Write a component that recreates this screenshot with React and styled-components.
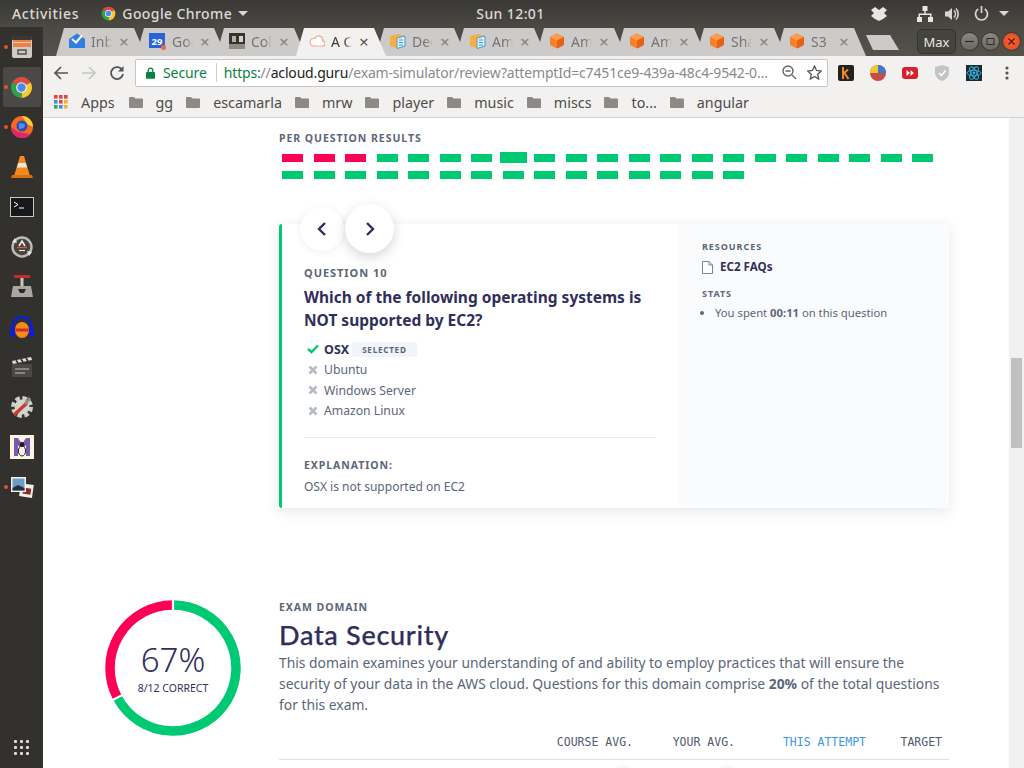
import React from 'react'
import styled, { createGlobalStyle } from 'styled-components'

const GlobalStyle = createGlobalStyle`
  html, body { margin: 0; padding: 0; height: 768px; overflow: hidden; background: #fff; }
  #root { height: 768px; }
  * { box-sizing: border-box; }
`

const ui = `"Noto Sans", "Liberation Sans", sans-serif`
const navy = '#302f5c'
const slate = '#5b6678'
const green = '#00c974'
const pink = '#ff0058'

const Desktop = styled.div`
  width: 1024px;
  height: 768px;
  display: flex;
  flex-direction: column;
  overflow: hidden;
  font-family: ${ui};
`

/* ---- gnome top bar ---- */
const TopBar = styled.div`
  height: 27px;
  flex: none;
  display: flex;
  align-items: center;
  background: linear-gradient(#3a3834, #4b4944);
  color: #dcdad6;
  font-size: 14px;
  font-weight: 500;
  letter-spacing: 0.4px;
`
const BarSide = styled.div`
  flex: 1;
  display: flex;
  align-items: center;
  justify-content: ${({ $end }) => ($end ? 'flex-end' : 'flex-start')};
  padding: ${({ $end }) => ($end ? '0 15px 0 0' : '0 0 0 12px')};
`
const Activities = styled.span`
  letter-spacing: 0.7px;
`
const AppName = styled.span`
  display: flex;
  align-items: center;
  gap: 6px;
  margin-left: 22px;
`
const Caret = styled.span`
  width: 0;
  height: 0;
  border-left: 5px solid transparent;
  border-right: 5px solid transparent;
  border-top: 5px solid #d8d6d2;
`
const TrayIcon = styled.svg`
  display: block;
  margin-right: ${({ $gap }) => $gap || 0}px;
`

/* ---- main area ---- */
const Workspace = styled.div`
  flex: 1;
  min-height: 0;
  display: flex;
`
const Dock = styled.div`
  width: 43px;
  flex: none;
  display: flex;
  flex-direction: column;
  align-items: center;
  background: #33312d;
`
const DockSlot = styled.div`
  position: relative;
  width: 38px;
  height: 40px;
  display: flex;
  align-items: center;
  justify-content: center;
  border-radius: 3px;
  background: ${({ $active }) => ($active ? '#4b4946' : 'transparent')};
`
const RunDot = styled.span`
  position: absolute;
  left: 1px;
  top: 18px;
  width: 4px;
  height: 4px;
  border-radius: 50%;
  background: #e0552a;
`
const DockGrid = styled.div`
  margin-top: auto;
  margin-bottom: 13px;
  display: grid;
  grid-template-columns: repeat(3, 3px);
  gap: 3px;
  & > span { width: 3px; height: 3px; background: #dedcd8; border-radius: 1px; }
`
const Browser = styled.div`
  flex: 1;
  min-width: 0;
  display: flex;
  flex-direction: column;
`

/* ---- tabs ---- */
const TabStrip = styled.div`
  height: 29px;
  flex: none;
  display: flex;
  align-items: flex-end;
  padding-left: 13px;
  background: linear-gradient(#4b4944, #55524c);
`
const Tab = styled.div`
  position: relative;
  width: 90px;
  height: 28px;
  margin-right: -10px;
  flex: none;
  display: flex;
  align-items: center;
  padding: 0 0 2px 13px;
  clip-path: polygon(0 100%, 8px 0, 78px 0, 90px 100%);
  background: ${({ $active }) => ($active ? '#f2f1f0' : '#cdcbc9')};
  color: ${({ $active }) => ($active ? '#3a3a3a' : '#77746f')};
  font-size: 14px;
  z-index: ${({ $active }) => ($active ? 2 : 1)};
`
const TabTitle = styled.span`
  width: 21px;
  margin-left: 6px;
  overflow: hidden;
  white-space: nowrap;
  -webkit-mask-image: linear-gradient(90deg, #000 65%, transparent);
  mask-image: linear-gradient(90deg, #000 65%, transparent);
`
const TabClose = styled.span`
  margin-left: 7px;
  font-size: 17px;
  line-height: 1;
  color: ${({ $active }) => ($active ? '#555' : '#85827e')};
`
const NewTab = styled.div`
  width: 33px;
  height: 15px;
  margin: 0 0 6px 10px;
  flex: none;
  background: #cdcbc9;
  clip-path: polygon(0 0, 24px 0, 100% 100%, 7px 100%);
`
const WindowButtons = styled.div`
  margin-left: auto;
  align-self: center;
  display: flex;
  align-items: center;
  gap: 2px;
  padding-right: 3px;
`
const MaxLabel = styled.div`
  width: 39px;
  height: 25px;
  margin-right: 2px;
  display: flex;
  align-items: center;
  justify-content: center;
  border: 1px solid #35332f;
  border-radius: 5px;
  background: #45433e;
  color: #e8e6e2;
  font-size: 13px;
`
const RoundButton = styled.div`
  width: 19px;
  height: 19px;
  border-radius: 50%;
  display: flex;
  align-items: center;
  justify-content: center;
  background: ${({ $close }) => ($close ? 'radial-gradient(#f0653a, #e0481c)' : 'linear-gradient(#8a8780, #6a6761)')};
  border: 1px solid #3a3834;
`

/* ---- toolbar ---- */
const Toolbar = styled.div`
  height: 33px;
  flex: none;
  display: flex;
  align-items: center;
  background: #f2f1f0;
  padding-left: 10px;
`
const NavIcon = styled.svg`
  display: block;
  flex: none;
  margin-right: ${({ $gap }) => $gap || 0}px;
`
const AddressBar = styled.div`
  width: 693px;
  height: 28px;
  margin-left: 10px;
  flex: none;
  display: flex;
  align-items: center;
  padding: 0 5px 0 10px;
  background: #fff;
  border: 1px solid #c6c5c3;
  border-radius: 2px;
  font-size: 14px;
  white-space: nowrap;
`
const SecureLabel = styled.span`
  margin-left: 8px;
  padding-right: 9px;
  border-right: 1px solid #cfcfcf;
  color: #0b8043;
  letter-spacing: -0.1px;
`
const UrlText = styled.span`
  margin-left: 7px;
  flex: 1;
  overflow: hidden;
  color: #8a8a8a;
  letter-spacing: -0.17px;
  & > b { font-weight: 400; color: #0b8043; }
  & > i { font-style: normal; color: #222; }
`
const Extensions = styled.div`
  flex: 1;
  display: flex;
  align-items: center;
  padding-left: 9px;
`

/* ---- bookmarks ---- */
const BookmarkBar = styled.div`
  height: 29px;
  flex: none;
  display: flex;
  align-items: center;
  padding: 0 0 2px 11px;
  background: #f2f1f0;
  border-bottom: 1px solid #d2d1cf;
  color: #4d4b48;
  font-size: 14.3px;
`
const AppsLabel = styled.span`
  margin: 0 14px 0 13px;
`
const Bookmark = styled.span`
  display: flex;
  align-items: center;
  gap: 13px;
  margin-right: 13px;
`

/* ---- page ---- */
const Viewport = styled.div`
  flex: 1;
  min-height: 0;
  display: flex;
  background: #fff;
`
const Page = styled.div`
  flex: 1;
  min-width: 0;
  overflow: hidden;
  padding-left: 236px;
`
const Scrollbar = styled.div`
  width: 15px;
  flex: none;
  padding: 240px 2px 0;
  background: #f1f1f1;
  & > div { height: 90px; background: #c1c1c1; }
`
const Content = styled.div`
  width: 670px;
`
const Eyebrow = styled.div`
  color: ${slate};
  font-size: 10.5px;
  line-height: 14px;
  font-weight: 700;
  letter-spacing: 0.95px;
  text-transform: uppercase;
`
const ResultsLabel = styled(Eyebrow)`
  padding-top: 13px;
`
const ResultGrid = styled.div`
  display: grid;
  grid-template-columns: repeat(21, 21px);
  column-gap: 10.5px;
  row-gap: 9px;
  margin: 9px 0 0 3px;
`
const ResultBar = styled.div`
  height: 8px;
  position: relative;
  background: ${({ $wrong }) => ($wrong ? pink : green)};
  ${({ $current }) => $current && `
    margin: -2px -3px -1px -3px;
    height: 11px;
    box-shadow: 0 0 0 2px #fff, 0 1px 5px 2px rgba(60, 70, 90, .12);
  `}
`
const Card = styled.div`
  position: relative;
  margin-top: 45px;
  height: 284px;
  display: flex;
  border-left: 3px solid ${green};
  border-radius: 3px 0 0 3px;
  box-shadow: 0 3px 14px rgba(60, 70, 90, .13);
`
const CardNav = styled.div`
  position: absolute;
  left: 18px;
  top: -20px;
  display: flex;
  align-items: center;
  gap: 1px;
`
const NavCircle = styled.div`
  width: ${({ $big }) => ($big ? 49 : 44)}px;
  height: ${({ $big }) => ($big ? 49 : 44)}px;
  border-radius: 50%;
  display: flex;
  align-items: center;
  justify-content: center;
  background: #fff;
  box-shadow: ${({ $big }) => ($big ? '0 4px 12px rgba(50, 50, 90, .2)' : '0 1px 6px rgba(50, 50, 90, .08)')};
`
const CardMain = styled.div`
  width: 397px;
  flex: none;
  padding: 42px 23px 0 22px;
  background: #fff;
`
const QuestionLabel = styled(Eyebrow)`
  font-size: 11px;
`
const QuestionTitle = styled.h2`
  margin: 6px 0 0;
  color: ${navy};
  font-size: 15.5px;
  line-height: 23px;
  font-weight: 700;
`
const Options = styled.div`
  margin-top: 7.3px;
`
const Option = styled.div`
  height: 20.4px;
  display: flex;
  align-items: center;
  color: ${({ $picked }) => ($picked ? navy : slate)};
  font-size: ${({ $picked }) => ($picked ? 12.5 : 12.2)}px;
  font-weight: ${({ $picked }) => ($picked ? 700 : 400)};
`
const OptionMark = styled.span`
  width: 17px;
  flex: none;
  margin-right: 3px;
  display: flex;
  justify-content: center;
`
const SelectedTag = styled.span`
  margin-left: 3px;
  padding: 0 10px;
  height: 15px;
  display: flex;
  align-items: center;
  border-radius: 2px;
  background: #f1f4f8;
  color: ${slate};
  font-size: 8.2px;
  font-weight: 700;
  letter-spacing: 0.7px;
`
const Divider = styled.hr`
  margin: 15.7px 0 0;
  border: 0;
  border-top: 1px solid #e8e9ec;
`
const ExplainLabel = styled(Eyebrow)`
  margin-top: 20px;
`
const ExplainText = styled.div`
  margin-top: 5px;
  color: ${slate};
  font-size: 12px;
  line-height: 20px;
`
const CardAside = styled.div`
  flex: 1;
  padding: 17px 0 0 23px;
  background: #fafbfd;
`
const AsideLabel = styled(Eyebrow)`
  font-size: 9px;
  line-height: 12px;
  margin-top: ${({ $gap }) => $gap || 0}px;
`
const ResourceLink = styled.div`
  margin-top: 6px;
  display: flex;
  align-items: center;
  gap: 7px;
  color: ${navy};
  font-size: 11.6px;
  line-height: 16px;
  font-weight: 700;
`
const StatList = styled.ul`
  margin: 5px 0 0;
  padding: 0 0 0 13px;
  color: ${slate};
  font-size: 11.25px;
  line-height: 16px;
  & b { font-weight: 700; }
`
const DomainSection = styled.section`
  position: relative;
  margin-top: 92px;
`
const ScoreRing = styled.div`
  position: absolute;
  left: -174px;
  top: 0;
  width: 136px;
  height: 136px;
`
const ScoreText = styled.div`
  position: absolute;
  inset: 0;
  display: flex;
  flex-direction: column;
  align-items: center;
  color: ${navy};
`
const ScoreValue = styled.div`
  margin-top: 40px;
  font-size: 33px;
  line-height: 40px;
  font-weight: 300;
`
const ScoreCaption = styled.div`
  margin-top: 1px;
  font-size: 10.5px;
  line-height: 14px;
`
const DomainTitle = styled.h1`
  margin: 4px 0 0;
  color: ${navy};
  font-family: Lato, sans-serif;
  font-size: 27px;
  line-height: 34px;
  font-weight: 500;
  letter-spacing: 0.7px;
  -webkit-text-stroke: 0.25px ${navy};
`
const DomainText = styled.p`
  margin: 0;
  color: ${slate};
  font-size: 13.85px;
  line-height: 21px;
  & b { font-weight: 700; }
`
const ScoreColumns = styled.div`
  display: grid;
  grid-template-columns: 1fr 102px 131px 76px;
  padding-right: 7px;
`
const ScoreHeader = styled(ScoreColumns)`
  margin-top: 21px;
  padding-bottom: 10px;
  border-bottom: 1px solid #dfe1e4;
  font-family: "DejaVu Sans Mono", "Liberation Mono", monospace;
  font-size: 11.5px;
  line-height: 13px;
  text-align: right;
`
const ScoreColumn = styled.span`
  grid-column: ${({ $col }) => $col};
  color: ${({ $accent }) => ($accent ? '#3d97e3' : '#4f5a6c')};
`
const ScoreRow = styled(ScoreColumns)`
  padding-top: 5px;
`
const ScoreDot = styled.div`
  grid-column: ${({ $col }) => $col};
  justify-self: end;
  width: 26px;
  height: 26px;
  margin-right: ${({ $shift }) => $shift}px;
  border-radius: 50%;
  background: #f7f7f8;
`

/* ---- drawings ---- */
const ChromeLogo = ({ size }) => (
  <svg width={size} height={size} viewBox="0 0 24 24">
    <path d="M12 12L2.5 6.5A11 11 0 0 1 21.5 6.5Z" fill="#dd4b3e" />
    <path d="M12 12L21.5 6.5A11 11 0 0 1 12 23Z" fill="#f7c631" />
    <path d="M12 12L12 23A11 11 0 0 1 2.5 6.5Z" fill="#2fa04c" />
    <circle cx="12" cy="12" r="5.6" fill="#f2f2f2" />
    <circle cx="12" cy="12" r="4.4" fill="#4a8af0" />
  </svg>
)

const Cube = () => (
  <svg width="16" height="16" viewBox="0 0 16 16">
    <path d="M8 0.5L15 4V12L8 15.5L1 12V4Z" fill="#f7802a" />
    <path d="M8 0.5L15 4L8 7.5L1 4Z" fill="#fb9a4a" />
    <path d="M8 7.5L15 4V12L8 15.5Z" fill="#e2641a" />
  </svg>
)

const DocBox = () => (
  <svg width="17" height="16" viewBox="0 0 17 16">
    <path d="M1 3L9 1L16 3V13L8 15.5L1 13Z" fill="#f5b041" />
    <path d="M8 5L16 3V13L8 15.5Z" fill="#dff1fb" stroke="#3aa0dd" />
    <path d="M10 7H14M10 9.5H14M10 12H14" stroke="#3aa0dd" strokeWidth="1" />
  </svg>
)

const TabIcons = {
  inbox: () => (
    <svg width="16" height="16" viewBox="0 0 16 16">
      <path d="M0 6L8 0.5L16 6V15H0Z" fill="#2f7fe0" />
      <path d="M3 6L7 9.5L13 2.5" fill="none" stroke="#fff" strokeWidth="2" />
    </svg>
  ),
  calendar: () => (
    <svg width="17" height="17" viewBox="0 0 17 17">
      <rect width="16" height="15" fill="#2a63d8" />
      <text x="8" y="12" textAnchor="middle" fontFamily="Noto Sans, sans-serif" fontSize="9.5" fontWeight="700" fill="#fff">29</text>
      <circle cx="14.5" cy="14.5" r="2.5" fill="#ee6a3a" />
    </svg>
  ),
  photo: () => (
    <svg width="16" height="16" viewBox="0 0 16 16">
      <rect width="16" height="16" fill="#37332f" />
      <rect y="11" width="16" height="5" fill="#8f8a82" />
      <rect x="3" y="3" width="4" height="6" fill="#b5b0a8" />
      <rect x="10" y="3" width="4" height="6" fill="#d6d2cc" />
    </svg>
  ),
  cloud: () => (
    <svg width="16" height="16" viewBox="0 0 16 16">
      <path d="M4 13H13A2.6 2.6 0 0 0 13.6 7.8A4 4 0 0 0 6 5.4A3.6 3.6 0 0 0 4 13Z" fill="#fff" stroke="#f7a98a" strokeWidth="1.2" />
    </svg>
  ),
  doc: DocBox,
  cube: Cube,
}

const tabs = [
  { icon: 'inbox', title: 'Inb' },
  { icon: 'calendar', title: 'Goo' },
  { icon: 'photo', title: 'Col' },
  { icon: 'cloud', title: 'A C', active: true },
  { icon: 'doc', title: 'Dec' },
  { icon: 'doc', title: 'Am' },
  { icon: 'cube', title: 'Am' },
  { icon: 'cube', title: 'Am' },
  { icon: 'cube', title: 'Sha' },
  { icon: 'cube', title: 'S3 I' },
]

const dockIcons = [
  {
    dot: true,
    art: (
      <svg width="22" height="22" viewBox="0 0 22 22">
        <rect x="1" y="0" width="20" height="22" rx="2" fill="#cfccc6" />
        <rect x="1" y="0" width="20" height="4" rx="1" fill="#3a3834" />
        <rect x="2" y="4" width="18" height="7" fill="#e8824a" />
        <rect x="2" y="6" width="18" height="1" fill="#f4c49c" />
        <rect x="7" y="14" width="8" height="4" fill="none" stroke="#55534e" strokeWidth="1.5" />
      </svg>
    ),
  },
  { dot: true, active: true, art: <ChromeLogo size={23} /> },
  {
    dot: true,
    art: (
      <svg width="24" height="24" viewBox="0 0 24 24">
        <circle cx="12" cy="12" r="11" fill="#f36a1f" />
        <path d="M12 1A11 11 0 0 1 23 12L17 9L14 4Z" fill="#ffcb2e" />
        <path d="M1 12A11 11 0 0 0 12 23A11 11 0 0 0 20 19L8 17Z" fill="#e2246e" />
        <circle cx="12" cy="11" r="5.5" fill="#2b4fb8" />
        <path d="M9 8L15 9L14 13L9 14Z" fill="#5b89e6" />
      </svg>
    ),
  },
  {
    art: (
      <svg width="24" height="24" viewBox="0 0 24 24">
        <path d="M10 1H14L20 21H4Z" fill="#f28a1d" />
        <path d="M8.2 8H15.8L17 12.5H7Z" fill="#e9e6e0" />
        <path d="M2 20H22L23 23H1Z" fill="#d96f10" />
      </svg>
    ),
  },
  {
    art: (
      <svg width="24" height="20" viewBox="0 0 24 20">
        <rect x="0.5" y="0.5" width="23" height="19" fill="#17181a" stroke="#c9c7c2" />
        <path d="M4 5L8 7.5L4 10" fill="none" stroke="#fff" strokeWidth="1" />
        <path d="M9 11H14" stroke="#fff" strokeWidth="1" />
      </svg>
    ),
  },
  {
    art: (
      <svg width="24" height="24" viewBox="0 0 24 24">
        <circle cx="12" cy="12" r="9.5" fill="#45433f" stroke="#bdbbb6" strokeWidth="2.4" />
        <path d="M2 7L7 8L5 3Z M22 17L17 16L19 21Z" fill="#e6e4e0" />
        <path d="M9 11L12 6L15 11" fill="none" stroke="#f0eee9" strokeWidth="1.6" />
        <path d="M7 12.5H17" stroke="#e3562c" strokeWidth="1.2" />
        <path d="M9 15.5H15" stroke="#e6e4e0" strokeWidth="1.2" />
      </svg>
    ),
  },
  {
    art: (
      <svg width="24" height="24" viewBox="0 0 24 24">
        <rect x="4" y="0" width="16" height="3" rx="1" fill="#c92a2a" />
        <rect x="10.5" y="3" width="3" height="8" fill="#c8c6c0" />
        <path d="M3 11H21L23 22H1Z" fill="#a9a7a1" />
        <path d="M8 14H16L14 18H10Z" fill="#2a2927" />
      </svg>
    ),
  },
  {
    art: (
      <svg width="26" height="24" viewBox="0 0 26 24">
        <path d="M4 15V11A9 9 0 0 1 22 11V15" fill="none" stroke="#0a1fd8" strokeWidth="2.5" />
        <rect x="1" y="12" width="5" height="10" rx="2" fill="#0a1fd8" />
        <rect x="20" y="12" width="5" height="10" rx="2" fill="#0a1fd8" />
        <ellipse cx="13" cy="15" rx="7" ry="8" fill="#f28a1d" />
        <path d="M6.5 15H19.5" stroke="#d92a1c" strokeWidth="3" />
      </svg>
    ),
  },
  {
    art: (
      <svg width="22" height="22" viewBox="0 0 22 22">
        <path d="M1 5L20 1L21 4L2 8Z" fill="#dedcd6" />
        <path d="M5 4.2L7 7M10 3.2L12 6M15 2.2L17 5" stroke="#2c2b29" strokeWidth="1.6" />
        <rect x="1" y="8" width="20" height="13" fill="#4a4946" />
        <path d="M4 13H18M4 17H14" stroke="#c4c2bc" strokeWidth="1" />
      </svg>
    ),
  },
  {
    art: (
      <svg width="24" height="24" viewBox="0 0 24 24">
        <circle cx="12" cy="12" r="8" fill="none" stroke="#cfcdc8" strokeWidth="6" strokeDasharray="4 2.3" />
        <circle cx="12" cy="12" r="7.5" fill="#d5d3ce" />
        <path d="M4 20L17 8" stroke="#c93a32" strokeWidth="3.4" />
        <path d="M15 9L20 3" stroke="#8d8b86" strokeWidth="3" />
      </svg>
    ),
  },
  {
    art: (
      <svg width="24" height="24" viewBox="0 0 24 24">
        <rect width="24" height="24" fill="#fdf6dc" />
        <path d="M4 3H8L12 9L16 3H20V21H16V10L12 15L8 10V21H4Z" fill="#7a5ab0" />
        <ellipse cx="12" cy="16" rx="3.6" ry="5" fill="#f4f2ee" stroke="#1f1f1f" />
        <circle cx="12" cy="9.5" r="2.4" fill="#1f1f1f" />
      </svg>
    ),
  },
  {
    dot: true,
    art: (
      <svg width="24" height="24" viewBox="0 0 24 24">
        <rect x="10" y="9" width="13" height="13" fill="#f0eee9" transform="rotate(8 16 15)" />
        <rect x="13" y="13" width="8" height="6" fill="#8a2a2a" transform="rotate(8 16 15)" />
        <rect x="1" y="2" width="15" height="15" fill="#f4f2ee" />
        <rect x="2.5" y="3.5" width="12" height="12" fill="#6d9cc4" />
        <path d="M2.5 15.5V13L8 10L14.5 13V15.5Z" fill="#27313c" />
      </svg>
    ),
  },
]

const ExtensionIcon = ({ gap, children }) => (
  <NavIcon width="18" height="18" viewBox="0 0 18 18" $gap={gap}>{children}</NavIcon>
)

const appDots = ['#e0463a', '#e0463a', '#e0463a', '#3f8de0', '#e0463a', '#f2b233', '#32a852', '#3f8de0', '#f2b233']

const results = Array.from({ length: 36 }, (_, i) => ({ wrong: i < 3, current: i === 7 }))

const folder = (
  <svg width="14" height="11" viewBox="0 0 14 11">
    <path d="M0 1A1 1 0 0 1 1 0H5L6.5 1.5H13A1 1 0 0 1 14 2.5V10A1 1 0 0 1 13 11H1A1 1 0 0 1 0 10Z" fill="#8b8a88" />
  </svg>
)

const crossMark = (
  <svg width="10" height="10" viewBox="0 0 10 10">
    <path d="M1.5 1.5L8.5 8.5M8.5 1.5L1.5 8.5" stroke="#b4bbc4" strokeWidth="2.6" />
  </svg>
)

function arcPath(from, to, r) {
  const point = deg => {
    const a = ((deg - 90) * Math.PI) / 180
    return `${68 + r * Math.cos(a)} ${68 + r * Math.sin(a)}`
  }
  return `M${point(from)}A${r} ${r} 0 ${to - from > 180 ? 1 : 0} 1 ${point(to)}`
}

export default function App() {
  return (
    <Desktop>
      <GlobalStyle />
      <TopBar>
        <BarSide>
          <Activities>Activities</Activities>
          <AppName><ChromeLogo size={15} />Google Chrome<Caret /></AppName>
        </BarSide>
        <span>Sun 12:01</span>
        <BarSide $end>
          <TrayIcon width="16" height="14" viewBox="0 0 16 14" $gap={30} fill="#e8e6e2">
            <path d="M0 3L4 0L8 3L12 0L16 3L13 6L16 9L12 12L8 14L4 12L0 9L3 6Z" />
          </TrayIcon>
          <TrayIcon width="16" height="16" viewBox="0 0 16 16" $gap={12} fill="#e8e6e2">
            <path d="M5.5 0H10.5V5H8.7V7.5H14.5V11H16V16H11V11H13V9H3V11H5V16H0V11H1.5V7.5H7.3V5H5.5Z" />
          </TrayIcon>
          <TrayIcon width="15" height="14" viewBox="0 0 15 14" $gap={14} fill="#d8d6d2">
            <path d="M0 4.5H3L7 1V13L3 9.5H0Z" />
            <path d="M9 3.5A5 5 0 0 1 9 10.5M11 1.5A8 8 0 0 1 11 12.5" fill="none" stroke="#d8d6d2" strokeWidth="1.6" />
          </TrayIcon>
          <TrayIcon width="15" height="15" viewBox="0 0 15 15" $gap={10} fill="none" stroke="#d8d6d2" strokeWidth="1.7">
            <path d="M4.2 3A6 6 0 1 0 10.8 3M7.5 0V7" />
          </TrayIcon>
          <Caret />
        </BarSide>
      </TopBar>
      <Workspace>
        <Dock>
          {dockIcons.map((item, i) => (
            <DockSlot key={i} $active={item.active}>
              {item.dot && <RunDot />}
              {item.art}
            </DockSlot>
          ))}
          <DockGrid>{Array.from({ length: 9 }, (_, i) => <span key={i} />)}</DockGrid>
        </Dock>
        <Browser>
          <TabStrip>
            {tabs.map((tab, i) => {
              const Icon = TabIcons[tab.icon]
              return (
                <Tab key={i} $active={tab.active}>
                  <Icon />
                  <TabTitle>{tab.title}</TabTitle>
                  <TabClose $active={tab.active}>×</TabClose>
                </Tab>
              )
            })}
            <NewTab />
            <WindowButtons>
              <MaxLabel>Max</MaxLabel>
              <RoundButton>
                <svg width="9" height="9" viewBox="0 0 9 9"><path d="M0 4.5H9" stroke="#2f2d2a" strokeWidth="1.2" /></svg>
              </RoundButton>
              <RoundButton>
                <svg width="9" height="9" viewBox="0 0 9 9"><rect x="1" y="1.5" width="7" height="6" fill="none" stroke="#2f2d2a" /></svg>
              </RoundButton>
              <RoundButton $close>
                <svg width="9" height="9" viewBox="0 0 9 9"><path d="M1.5 1.5L7.5 7.5M7.5 1.5L1.5 7.5" stroke="#5a1a08" strokeWidth="1.3" /></svg>
              </RoundButton>
            </WindowButtons>
          </TabStrip>
          <Toolbar>
            <NavIcon width="16" height="16" viewBox="0 0 16 16" $gap={12} fill="none" stroke="#555" strokeWidth="1.7">
              <path d="M15 8H2M8 2L2 8L8 14" />
            </NavIcon>
            <NavIcon width="16" height="16" viewBox="0 0 16 16" $gap={12} fill="none" stroke="#c6c6c6" strokeWidth="1.7">
              <path d="M1 8H14M8 2L14 8L8 14" />
            </NavIcon>
            <NavIcon width="16" height="16" viewBox="0 0 16 16" fill="none" stroke="#555" strokeWidth="1.8">
              <path d="M13.5 5.5A6 6 0 1 0 14 9" />
              <path d="M14.5 1V6.5H9" fill="#555" stroke="none" />
            </NavIcon>
            <AddressBar>
              <svg width="9" height="12" viewBox="0 0 10 13">
                <path d="M2.5 6V3.5A2.5 2.5 0 0 1 7.5 3.5V6" fill="none" stroke="#0b8043" strokeWidth="1.4" />
                <rect y="5.5" width="10" height="7.5" rx="1" fill="#0b8043" />
              </svg>
              <SecureLabel>Secure</SecureLabel>
              <UrlText><b>https:</b>//<i>acloud.guru</i>/exam-simulator/review?attemptId=c7451ce9-439a-48c4-9542-0…</UrlText>
              <NavIcon width="15" height="15" viewBox="0 0 15 15" $gap={10} fill="none" stroke="#666" strokeWidth="1.4">
                <circle cx="6" cy="6" r="5" />
                <path d="M3.5 6H8.5M10 10L14 14" />
              </NavIcon>
              <NavIcon width="15" height="15" viewBox="0 0 15 15" fill="none" stroke="#555" strokeWidth="1.3">
                <path d="M7.5 1L9.5 5.5L14.3 6L10.7 9.2L11.7 14L7.5 11.5L3.3 14L4.3 9.2L0.7 6L5.5 5.5Z" />
              </NavIcon>
            </AddressBar>
            <Extensions>
              <ExtensionIcon gap={14}>
                <rect x="1" y="1" width="16" height="16" rx="2" fill="#222" />
                <path d="M6 3V15M6 10L11 5.5M7.5 9L11.5 15" stroke="#f28a1d" strokeWidth="2" fill="none" />
              </ExtensionIcon>
              <ExtensionIcon gap={14}>
                <circle cx="9" cy="9" r="8" fill="#c25048" />
                <path d="M9 9L1 9A8 8 0 0 1 9 1Z" fill="#f2c62f" />
                <path d="M9 9L9 1A8 8 0 0 1 17 9Z" fill="#3d7cc9" />
              </ExtensionIcon>
              <ExtensionIcon gap={14}>
                <rect x="1" y="3" width="16" height="12" rx="3" fill="#d8202a" />
                <path d="M5.5 6L9 9L5.5 12ZM9.5 6L13 9L9.5 12Z" fill="#fff" />
              </ExtensionIcon>
              <ExtensionIcon gap={14}>
                <path d="M2 3L9 1L16 3V9C16 13 12 16 9 17C6 16 2 13 2 9Z" fill="#c4c4c4" />
                <path d="M6 9L8.5 11.5L12.5 6.5" stroke="#fff" strokeWidth="1.6" fill="none" />
              </ExtensionIcon>
              <ExtensionIcon gap={22}>
                <rect x="1" y="1" width="16" height="16" fill="#1c2a30" />
                <g fill="none" stroke="#35b8e6" strokeWidth=".9">
                  <ellipse cx="9" cy="9" rx="7" ry="2.8" />
                  <ellipse cx="9" cy="9" rx="7" ry="2.8" transform="rotate(60 9 9)" />
                  <ellipse cx="9" cy="9" rx="7" ry="2.8" transform="rotate(120 9 9)" />
                </g>
                <circle cx="9" cy="9" r="1.4" fill="#35b8e6" />
              </ExtensionIcon>
              <svg width="4" height="14" viewBox="0 0 4 14" fill="#555">
                <circle cx="2" cy="2" r="1.6" /><circle cx="2" cy="7" r="1.6" /><circle cx="2" cy="12" r="1.6" />
              </svg>
            </Extensions>
          </Toolbar>
          <BookmarkBar>
            <svg width="14" height="14" viewBox="0 0 14 14">
              {appDots.map((c, i) => (
                <rect key={i} x={(i % 3) * 5} y={Math.floor(i / 3) * 5} width="3.6" height="3.6" fill={c} />
              ))}
            </svg>
            <AppsLabel>Apps</AppsLabel>
            {['gg', 'escamarla', 'mrw', 'player', 'music', 'miscs', 'to...', 'angular'].map(name => (
              <Bookmark key={name}>{folder}{name}</Bookmark>
            ))}
          </BookmarkBar>
          <Viewport>
            <Page>
              <Content>
                <ResultsLabel>Per question results</ResultsLabel>
                <ResultGrid>
                  {results.map((r, i) => <ResultBar key={i} $wrong={r.wrong} $current={r.current} />)}
                </ResultGrid>
                <Card>
                  <CardNav>
                    <NavCircle>
                      <svg width="12" height="16" viewBox="0 0 12 16" fill="none" stroke={navy} strokeWidth="2.4"><path d="M9 2L3 8L9 14" /></svg>
                    </NavCircle>
                    <NavCircle $big>
                      <svg width="12" height="16" viewBox="0 0 12 16" fill="none" stroke={navy} strokeWidth="2.4"><path d="M3 2L9 8L3 14" /></svg>
                    </NavCircle>
                  </CardNav>
                  <CardMain>
                    <QuestionLabel>Question 10</QuestionLabel>
                    <QuestionTitle>Which of the following operating systems is NOT supported by EC2?</QuestionTitle>
                    <Options>
                      <Option $picked>
                        <OptionMark>
                          <svg width="12" height="10" viewBox="0 0 12 10" fill="none" stroke={green} strokeWidth="2.4"><path d="M1 5L4.5 8L11 1.5" /></svg>
                        </OptionMark>
                        OSX
                        <SelectedTag>SELECTED</SelectedTag>
                      </Option>
                      {['Ubuntu', 'Windows Server', 'Amazon Linux'].map(name => (
                        <Option key={name}><OptionMark>{crossMark}</OptionMark>{name}</Option>
                      ))}
                    </Options>
                    <Divider />
                    <ExplainLabel>Explanation:</ExplainLabel>
                    <ExplainText>OSX is not supported on EC2</ExplainText>
                  </CardMain>
                  <CardAside>
                    <AsideLabel>Resources</AsideLabel>
                    <ResourceLink>
                      <svg width="11" height="13" viewBox="0 0 11 13" fill="#fff" stroke="#77869a">
                        <path d="M0.5 0.5H7L10.5 4V12.5H0.5ZM7 0.5V4H10.5" />
                      </svg>
                      EC2 FAQs
                    </ResourceLink>
                    <AsideLabel $gap={13}>Stats</AsideLabel>
                    <StatList><li>You spent <b>00:11</b> on this question</li></StatList>
                  </CardAside>
                </Card>
                <DomainSection>
                  <ScoreRing>
                    <svg width="136" height="136" viewBox="0 0 136 136" fill="none" strokeWidth="9.5">
                      <path d={arcPath(1, 241, 63)} stroke={green} />
                      <path d={arcPath(243, 359, 63)} stroke={pink} />
                    </svg>
                    <ScoreText>
                      <ScoreValue>67%</ScoreValue>
                      <ScoreCaption>8/12 CORRECT</ScoreCaption>
                    </ScoreText>
                  </ScoreRing>
                  <Eyebrow>Exam domain</Eyebrow>
                  <DomainTitle>Data Security</DomainTitle>
                  <DomainText>
                    This domain examines your understanding of and ability to employ practices that will ensure the security of your data in the AWS cloud. Questions for this domain comprise <b>20%</b> of the total questions for this exam.
                  </DomainText>
                  <ScoreHeader>
                    <ScoreColumn $col={1}>COURSE AVG.</ScoreColumn>
                    <ScoreColumn $col={2}>YOUR AVG.</ScoreColumn>
                    <ScoreColumn $col={3} $accent>THIS ATTEMPT</ScoreColumn>
                    <ScoreColumn $col={4}>TARGET</ScoreColumn>
                  </ScoreHeader>
                  <ScoreRow>
                    <ScoreDot $col={1} $shift={-3} />
                    <ScoreDot $col={2} $shift={-5} />
                  </ScoreRow>
                </DomainSection>
              </Content>
            </Page>
            <Scrollbar><div /></Scrollbar>
          </Viewport>
        </Browser>
      </Workspace>
    </Desktop>
  )
}
